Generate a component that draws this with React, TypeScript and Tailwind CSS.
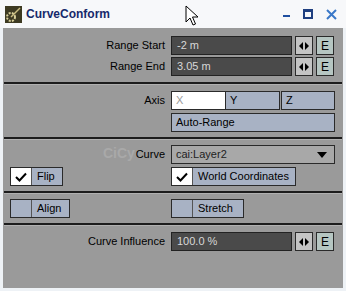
import React from 'react';

const font = { fontFamily: '"Liberation Sans", Arial, sans-serif' };

const Label = ({ children }: { children: React.ReactNode }) => (
  <div className="w-[163px] shrink-0 whitespace-nowrap pr-[1px] text-right text-[11px] leading-none text-black">{children}</div>
);

const Separator = () => (
  <div className="mx-[1px] border-t-2 border-[#1c1c1c] border-b border-b-[#b0b0b0]" />
);

const SliderBtn = () => (
  <div className="flex h-[19px] w-[18px] items-center justify-center border border-[#2a2a2a] bg-[#c4c4c4]">
    <svg width="10" height="8" viewBox="0 0 10 8">
      <path d="M4 0 L0 4 L4 8 Z M6 0 L10 4 L6 8 Z" fill="#000" />
    </svg>
  </div>
);

const EBtn = () => (
  <div className="flex h-[19px] w-[18px] items-center justify-center border border-[#2a2a2a] bg-[#b6c6c2] text-[12px] text-black">
    E
  </div>
);

const NumField = ({ label, value }: { label: string; value: string }) => (
  <div className="flex items-center gap-[5px]">
    <Label>{label}</Label>
    <div className="flex h-[19px] w-[121px] items-center border border-[#222] bg-[#4a4a4a] pl-[5px] text-[11px] text-[#d8d8d8]">
      {value}
    </div>
    <div className="ml-[-2px] flex gap-[3px]">
      <SliderBtn />
      <EBtn />
    </div>
  </div>
);

const Check = ({ label, checked, width }: { label: string; checked?: boolean; width: string }) => (
  <div className={`flex h-[19px] border border-[#2a2a2a] ${width}`}>
    <div className={`flex w-[21px] shrink-0 items-center justify-center border-r border-[#555] ${checked ? 'bg-white' : 'bg-[#a8b2c4]'}`}>
      {checked && (
        <svg width="12" height="10" viewBox="0 0 12 10">
          <path d="M1 5 L4.5 8.5 L11 1.5" fill="none" stroke="#000" strokeWidth="2" />
        </svg>
      )}
    </div>
    <div className="flex flex-1 items-center whitespace-nowrap bg-[#a8b2c4] pl-[5px] text-[11px] text-black">{label}</div>
  </div>
);

export default function App() {
  return (
    <div className="flex h-[291px] w-[346px] flex-col overflow-hidden bg-[#eef2f6]" style={font}>
      {/* title bar */}
      <div className="relative flex h-[28px] shrink-0 items-center bg-[#f7f8fa] pl-[5px]">
        <div className="flex h-[17px] w-[17px] items-center justify-center bg-[#3d3a22]">
          <svg width="15" height="15" viewBox="0 0 15 15">
            <circle cx="5" cy="10" r="4" fill="none" stroke="#d8cf9a" strokeWidth="2" strokeDasharray="2 1.2" />
            <path d="M5 10 L14 1" stroke="#c9bc80" strokeWidth="1.5" />
          </svg>
        </div>
        <span className="ml-[4px] text-[12px] font-bold text-[#16296b]">CurveConform</span>
        <div className="ml-auto mr-[9px] flex items-center gap-[13px]">
          <div className="mt-[4px] h-[2px] w-[7px] bg-[#1f4fa0]" />
          <div className="h-[10px] w-[10px] border-2 border-t-[3px] border-[#1f3f80]" />
          <svg width="11" height="11" viewBox="0 0 11 11">
            <path d="M1 1 L10 10 M10 1 L1 10" stroke="#3a78c8" strokeWidth="2" />
          </svg>
        </div>
        <svg className="absolute left-[185px] top-[5px]" width="14" height="22" viewBox="0 0 14 22">
          <path d="M1 1 L1 17 L5 13 L8 20 L10.5 19 L7.5 12 L13 12 Z" fill="#fff" stroke="#000" strokeWidth="1" />
        </svg>
      </div>

      {/* body */}
      <div className="mx-[3px] mb-[3px] flex flex-1 flex-col bg-[#9a9a9a]">
        <div className="flex flex-col gap-[2px] pt-[8px] pb-[6px]">
          <NumField label="Range Start" value="-2 m" />
          <NumField label="Range End" value="3.05 m" />
        </div>
        <Separator />
        <div className="flex flex-col gap-[3px] pt-[6px] pb-[5px]">
          <div className="flex items-center gap-[5px]">
            <Label>Axis</Label>
            <div className="flex w-[164px]">
              <div className="flex h-[19px] w-[55px] items-center border border-[#2a2a2a] bg-white pl-[4px] text-[11px] text-[#9a9a9a]">X</div>
              <div className="flex h-[19px] w-[54px] items-center border border-l-0 border-[#2a2a2a] bg-[#a8b2c4] pl-[4px] text-[11px] text-black">Y</div>
              <div className="ml-[1px] flex h-[19px] w-[54px] items-center border border-[#2a2a2a] bg-[#a8b2c4] pl-[4px] text-[11px] text-black">Z</div>
            </div>
          </div>
          <div className="flex items-center gap-[5px]">
            <div className="w-[163px] shrink-0" />
            <div className="flex h-[19px] w-[164px] items-center border border-[#2a2a2a] bg-[#a8b2c4] pl-[4px] text-[11px] text-black">Auto-Range</div>
          </div>
        </div>
        <Separator />
        <div className="relative flex flex-col gap-[3px] pt-[5px] pb-[5px]">
          <span className="absolute left-[100px] top-[6px] text-[14px] font-bold leading-none text-[#b0b0b0] opacity-70">CiCy</span>
          <div className="relative flex items-center gap-[5px]">
            <Label>Curve</Label>
            <div className="flex h-[19px] w-[164px] items-center justify-between border border-[#2a2a2a] bg-[#a8a8a8] pl-[4px] pr-[7px] text-[11px] text-[#222]">
              cai:Layer2
              <svg width="10" height="6" viewBox="0 0 10 6">
                <path d="M0 0 L10 0 L5 6 Z" fill="#000" />
              </svg>
            </div>
          </div>
          <div className="flex items-center pl-[7px]">
            <Check label="Flip" checked width="w-[53px]" />
            <div className="ml-[108px]">
              <Check label="World Coordinates" checked width="w-[125px]" />
            </div>
          </div>
        </div>
        <Separator />
        <div className="flex items-center py-[5px] pl-[7px]">
          <Check label="Align" width="w-[60px]" />
          <div className="ml-[101px]">
            <Check label="Stretch" width="w-[73px]" />
          </div>
        </div>
        <Separator />
        <div className="pt-[6px]">
          <NumField label="Curve Influence" value="100.0 %" />
        </div>
      </div>
    </div>
  );
}
